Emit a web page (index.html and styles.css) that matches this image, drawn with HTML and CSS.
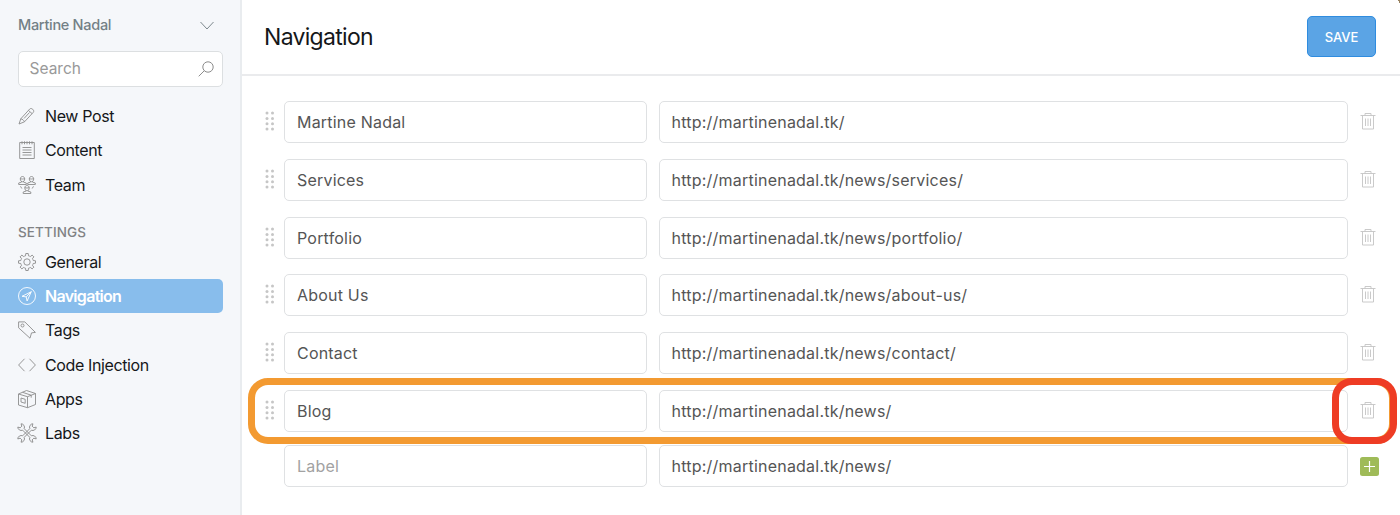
FILE: index.html
```html
<!DOCTYPE html>
<html lang="en">
<head>
<meta charset="utf-8">
<title>Navigation</title>
<link rel="stylesheet" href="styles.css">
</head>
<body>
<svg class="defs" aria-hidden="true">
  <symbol id="trash" viewBox="0 0 16 18"><path d="M.5 3.5h15M5 3.5v-2h6v2M2.5 3.5v13.5h11V3.5M5.500 6.500v7.500M8 6.500v7.500M10.500 6.500v7.500"/></symbol>
  <symbol id="grip" viewBox="0 0 10 20"><g stroke="none" fill="#c6c6c6"><circle cx="2" cy="2.100" r="1.500"/><circle cx="7.500" cy="2.100" r="1.500"/><circle cx="2" cy="7.400" r="1.500"/><circle cx="7.500" cy="7.400" r="1.500"/><circle cx="2" cy="12.700" r="1.500"/><circle cx="7.500" cy="12.700" r="1.500"/><circle cx="2" cy="18" r="1.500"/><circle cx="7.500" cy="18" r="1.500"/></g></symbol>
</svg>
<div class="app">
  <aside class="sidebar">
    <div class="account"><span>Martine Nadal</span><svg class="chevron" viewBox="0 0 14 9"><path d="M.5 1l6.500 7L13.500 1"/></svg></div>
    <div class="search"><span>Search</span><svg class="lens" viewBox="0 0 16 16"><circle cx="10" cy="6" r="5.200"/><path d="M6.300 9.700L.7 15.300"/></svg></div>
    <nav class="menu">
      <a class="item"><svg class="icon" viewBox="0 0 18 18"><path d="M1 17l1.800-5.200L11.700 2c1.600-1.700 5.300 1.400 3.600 3.300L6.500 14.800 1 17zM2.800 11.800c1.700.4 3.100 1.500 3.700 3M10.500 3.500l3.600 3.100M11.500 5.500L6 11.500"/></svg><span>New Post</span></a>
      <a class="item"><svg class="icon" viewBox="0 0 18 18"><path d="M1.700 1.500h14.600v16H1.700zM4.500 6.500h9M4.500 9h9M4.500 11.500h9M4.500 14h9"/><path d="M4 .3v3M6.500.3v3M9 .3v3M11.500.3v3M14 .3v3"/></svg><span>Content</span></a>
      <a class="item"><svg class="icon" viewBox="0 0 18 18"><g id="person"><path d="M2.300 2.900c0-3.200 4.400-3.200 4.400 0 0 3.800-4.400 3.800-4.400 0zM2.300 2.500c1.500.8 3 .5 4.400.1M3.500 5.200v.9L.7 7V8.500h7.600V7l-2.800-.9v-.9"/></g><use href="#person" x="9"/><use href="#person" x="4.500" y="9"/><path d="M2.500 10.300l1.300 2.200M15.500 10.300l-1.300 2.200"/></svg><span>Team</span></a>
      <h2 class="heading">SETTINGS</h2>
      <a class="item"><svg class="icon" viewBox="-9 -9 18 18"><circle r="3.200"/><path id="tooth" d="M-2.400-5.900l.9-.3.300-2.300h2.400l.3 2.300.9.300"/><use href="#tooth" transform="rotate(45)"/><use href="#tooth" transform="rotate(90)"/><use href="#tooth" transform="rotate(135)"/><use href="#tooth" transform="rotate(180)"/><use href="#tooth" transform="rotate(225)"/><use href="#tooth" transform="rotate(270)"/><use href="#tooth" transform="rotate(315)"/></svg><span>General</span></a>
      <a class="item active"><svg class="icon" viewBox="0 0 18 18"><circle cx="9" cy="9" r="8.500"/><path d="M13.300 4.700L4 9.300l4.200.6.900 4.100zM13.300 4.700L8.200 9.900"/></svg><span>Navigation</span></a>
      <a class="item"><svg class="icon" viewBox="0 0 18 18"><path d="M.6.900h6.200l10.600 10.500-3.900.5-1.500 5.300L.6 6.800z"/><circle cx="4.500" cy="4.500" r="1.500"/></svg><span>Tags</span></a>
      <a class="item"><svg class="icon" viewBox="0 0 18 18"><path d="M6.500 2.800L.6 9l5.900 6.200M11.500 2.800L17.400 9l-5.900 6.200"/></svg><span>Code Injection</span></a>
      <a class="item"><svg class="icon" viewBox="0 0 18 18"><path d="M.5 4L8.500.5l9 3v11L9.500 17.700l-9-2.700zM.5 4l9 2.700 8-3.200M9.500 6.700v11M4.500 2.300l8.700 2.900v2.500M3 8l4.200 1.300v4L3 12z"/></svg><span>Apps</span></a>
      <a class="item"><svg class="icon" viewBox="-9 -9 18 18"><g id="wrench" transform="rotate(45)"><path d="M5.100-1.100A3.400 3.400 0 0 1 10.700-2.300L8.500-1.200V1.200L10.700 2.300A3.400 3.400 0 0 1 5.100 1.100H-5.100A3.400 3.400 0 0 1-10.700 2.300L-8.500 1.200V-1.200L-10.700-2.300A3.400 3.400 0 0 1-5.100-1.100z"/></g><use href="#wrench" transform="rotate(90)"/></svg><span>Labs</span></a>
    </nav>
  </aside>
  <main class="main">
    <header class="header"><h1>Navigation</h1><button class="save">SAVE</button></header>
    <section class="rows">
      <div class="row"><svg class="grip"><use href="#grip"/></svg><div class="field label">Martine Nadal</div><div class="field url">http://martinenadal.tk/</div><svg class="trash"><use href="#trash"/></svg></div>
      <div class="row"><svg class="grip"><use href="#grip"/></svg><div class="field label">Services</div><div class="field url">http://martinenadal.tk/news/services/</div><svg class="trash"><use href="#trash"/></svg></div>
      <div class="row"><svg class="grip"><use href="#grip"/></svg><div class="field label">Portfolio</div><div class="field url">http://martinenadal.tk/news/portfolio/</div><svg class="trash"><use href="#trash"/></svg></div>
      <div class="row"><svg class="grip"><use href="#grip"/></svg><div class="field label">About Us</div><div class="field url">http://martinenadal.tk/news/about-us/</div><svg class="trash"><use href="#trash"/></svg></div>
      <div class="row"><svg class="grip"><use href="#grip"/></svg><div class="field label">Contact</div><div class="field url">http://martinenadal.tk/news/contact/</div><svg class="trash"><use href="#trash"/></svg></div>
      <div class="row marked"><svg class="grip"><use href="#grip"/></svg><div class="field label">Blog</div><div class="field url">http://martinenadal.tk/news/</div><svg class="trash"><use href="#trash"/></svg><div class="ring orange"></div><div class="ring red"></div></div>
      <div class="row new"><span class="grip"></span><div class="field label placeholder">Label</div><div class="field url">http://martinenadal.tk/news/</div><svg class="add" viewBox="0 0 19 19"><path d="M9.500 4v11M4 9.500h11"/></svg></div>
    </section>
    <div class="corner"></div>
  </main>
</div>
</body>
</html>
```
FILE: styles.css
```css
* { box-sizing: border-box; }
body { margin: 0; font-family: Inter, "Liberation Sans", sans-serif; background: #fff; color: #15171a; }
svg { fill: none; stroke: #8c8c8c; stroke-width: 1; flex: none; }
.defs { display: none; }
.app { display: flex; height: 515px; overflow: hidden; }

.sidebar { width: 242px; background: #f5f7fa; border-right: 2px solid #e9ecef; padding: 13px 18px 0 0; flex: none; }
.account { display: flex; justify-content: space-between; align-items: center; height: 22px; padding: 0 8px 0 18px; font-size: 14.500px; font-weight: 500; color: #738086; letter-spacing: -.3px; }
.chevron { width: 14px; height: 9px; stroke: #7d888d; margin-top: 2px; }
.search { display: flex; justify-content: space-between; align-items: center; height: 36.500px; margin: 15.500px -1px 0 18px; padding: 0 8px 0 10.500px; border: 1px solid #dcdfe1; border-radius: 5px; background: #fff; color: #999; font-size: 15.500px; line-height: 21px; }
.lens { width: 16px; height: 16px; }
.menu { padding-top: 12px; }
.item { display: flex; align-items: center; gap: 9.500px; height: 34.250px; padding-left: 17.500px; font-size: 16px; border-radius: 0 5px 5px 0; margin-right: -1px; letter-spacing: -.38px; }
.icon { width: 18px; height: 18px; stroke-width: .9; overflow: visible; }
.active { background: #88bdec; color: #fff; font-weight: 600; letter-spacing: -.7px; }
.active .icon { stroke: #fff; }
.heading { margin: 22px 0 5px 18px; font-size: 13.500px; line-height: 16px; font-weight: 500; color: #808284; letter-spacing: .1px; }

.main { flex: 1; position: relative; }
.header { display: flex; align-items: center; justify-content: space-between; height: 75.500px; border-bottom: 2px solid #eaebed; padding: 0 24px 0 22px; }
.header h1 { margin: 0; font-size: 23px; font-weight: 400; letter-spacing: -.7px; }
.save { width: 69px; height: 41px; border: 1px solid #2f8cdf; border-radius: 5px; background: #5ba4e5; color: #fff; font: 500 13px Inter, sans-serif; letter-spacing: -.1px; }
.rows { padding: 25.500px 20px 0 22px; }
.row { display: flex; align-items: center; height: 42px; margin-bottom: 15.800px; position: relative; }
.grip { width: 10px; height: 20px; margin: 0 9px 0 1px; flex: none; position: relative; top: -1px; }
.field { height: 42px; border: 1px solid #dfe1e3; border-radius: 5px; padding-left: 12px; line-height: 41px; font-size: 16px; color: #555; white-space: nowrap; }
.label { width: 363px; margin-right: 11.500px; letter-spacing: .2px; }
.url { width: 689px; letter-spacing: .22px; }
.trash { width: 16px; height: 18px; margin-left: 12px; stroke: #c4c4c4; stroke-width: .9; position: relative; top: -1px; }
.placeholder { color: #a2a2a2; }
.marked { margin-bottom: 13.500px; }
.add { width: 19px; height: 19px; margin-left: 12px; border-radius: 2.500px; background: #9fbb58; stroke: #fff; stroke-width: 1.200; }
/* Highlight outlines drawn over the list */
.ring { position: absolute; border: 7px solid #f39a31; border-radius: 20px; height: 66px; top: -12px; }
.orange { left: -16px; width: 1148px; }
.red { left: 1068px; width: 65px; border-color: #ee3c24; }
.corner { position: absolute; top: 0; right: 0; width: 3px; height: 3px; background: linear-gradient(to bottom left, #98815f 50%, transparent 50%); }
```
